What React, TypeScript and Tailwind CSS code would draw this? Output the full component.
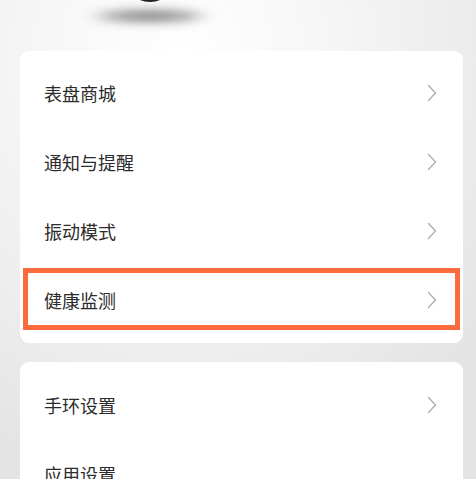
import React from "react"

type Row = { label: string; highlight?: boolean; noArrow?: boolean }

const groupOne: Row[] = [
  { label: "表盘商城" },
  { label: "通知与提醒" },
  { label: "振动模式" },
  { label: "健康监测", highlight: true },
]

const groupTwo: Row[] = [{ label: "手环设置" }, { label: "应用设置", noArrow: true }]

function Chevron() {
  return (
    <svg width="12" height="18" viewBox="0 0 12 18" fill="none" className="shrink-0">
      <path d="M2.5 1.5 L9.5 9 L2.5 16.5" stroke="#b0b0b0" strokeWidth="1.4" strokeLinecap="round" strokeLinejoin="round" />
    </svg>
  )
}

function SettingRow({ row }: { row: Row }) {
  return (
    <div className="relative flex h-[69px] items-center justify-between pl-[24px] pr-[25px]">
      <span className="text-[18px] leading-none text-[#2b2b2b]">{row.label}</span>
      {!row.noArrow && <Chevron />}
      {row.highlight && (
        <div className="pointer-events-none absolute inset-x-[3px] top-[3px] bottom-[4px] border-[5px] border-[#fa6b3e]" />
      )}
    </div>
  )
}

export default function App() {
  return (
    <div
      className="h-[479px] w-[476px] overflow-hidden bg-[radial-gradient(ellipse_80%_90%_at_38%_12%,#ffffff_0%,#f7f7f7_35%,#ececec_75%,#e4e4e4_100%)]"
      style={{ fontFamily: '"Noto Sans CJK SC", "Noto Sans", sans-serif' }}
    >
      {/* device bottom + shadow */}
      <div className="h-[51px]">
        <svg width="476" height="51" viewBox="0 0 476 51">
          <defs>
            <filter id="blur" x="-50%" y="-100%" width="200%" height="300%">
              <feGaussianBlur stdDeviation="5" />
            </filter>
            <radialGradient id="shade" cx="50%" cy="50%" r="50%">
              <stop offset="0%" stopColor="#7a7a7a" />
              <stop offset="60%" stopColor="#a8a8a8" />
              <stop offset="100%" stopColor="#e8e8e8" stopOpacity="0" />
            </radialGradient>
          </defs>
          <ellipse cx="150" cy="16" rx="70" ry="9" fill="url(#shade)" filter="url(#blur)" />
          <ellipse cx="150" cy="-7" rx="16" ry="9" fill="#222222" />
        </svg>
      </div>

      <div className="flex flex-col gap-[19px] px-[20px] pr-[13px]">
        <div className="rounded-[9px] bg-white pt-[7px] pb-[9px]">
          {groupOne.map((row) => (
            <SettingRow key={row.label} row={row} />
          ))}
        </div>
        <div className="rounded-[9px] bg-white pt-[8px] pb-[9px]">
          {groupTwo.map((row) => (
            <SettingRow key={row.label} row={row} />
          ))}
        </div>
      </div>
    </div>
  )
}
